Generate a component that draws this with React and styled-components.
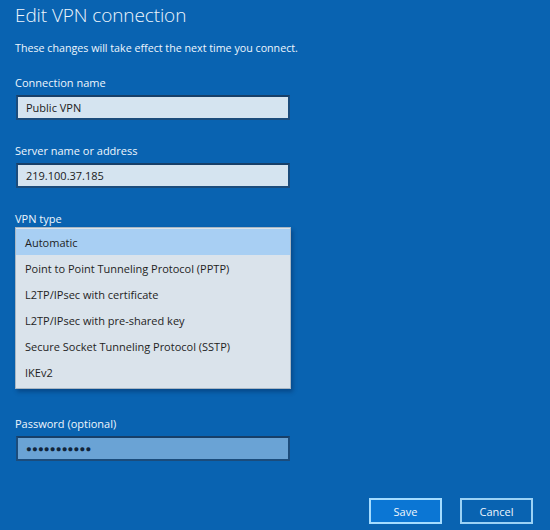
import React from 'react';
import styled, { createGlobalStyle } from 'styled-components';

const GlobalStyle = createGlobalStyle`
  html, body {
    margin: 0;
    padding: 0;
    background: #0963b1;
  }
  body {
    font-family: "Open Sans", "Noto Sans", sans-serif;
  }
`;

const Panel = styled.div`
  width: 550px;
  height: 530px;
  box-sizing: border-box;
  padding: 2px 15px 0 15px;
  background: #0963b1;
  color: #eef6fd;
  display: flex;
  flex-direction: column;
  overflow: hidden;
`;

const Title = styled.h1`
  margin: 0;
  font-size: 19px;
  font-weight: 300;
  line-height: 26px;
  letter-spacing: -0.1px;
`;

const Note = styled.p`
  margin: 13px 0 0 0;
  font-size: 10.7px;
  line-height: 14px;
`;

const Field = styled.div`
  display: flex;
  flex-direction: column;
  margin-top: ${p => p.gap}px;
`;

const Label = styled.label`
  font-size: 11px;
  line-height: 14px;
  margin-bottom: 5px;
`;

const Input = styled.div`
  width: 274px;
  height: 25px;
  box-sizing: border-box;
  margin-left: 1px;
  padding: 0 8px;
  display: flex;
  align-items: center;
  background: ${p => (p.muted ? '#6aa3d5' : '#d5e4f0')};
  border: 2px solid #1b4c7c;
  border-top-color: #173f68;
  color: #1a1a1a;
  font-size: 11px;
`;

const Dots = styled.span`
  letter-spacing: 0.2px;
  font-size: 9.5px;
  color: #10243a;
`;

/* open drop-down list, drawn over the closed select */
const Menu = styled.ul`
  list-style: none;
  margin: -4px 0 0 0;
  padding: 1px 0 3px 0;
  width: 276px;
  box-sizing: border-box;
  background: #dae3eb;
  border: 1px solid #a9b7c4;
  box-shadow: 2px 3px 4px rgba(0, 30, 70, 0.35);
`;

const Option = styled.li`
  height: 26px;
  display: flex;
  align-items: center;
  padding: 0 9px;
  font-size: 11px;
  color: #1e1e1e;
  background: ${p => (p.selected ? '#a8cff3' : 'transparent')};
`;

const Actions = styled.div`
  display: flex;
  justify-content: flex-end;
  gap: 18px;
  margin-top: 37px;
  padding-right: 2px;
`;

const Button = styled.button`
  width: 73px;
  height: 26px;
  box-sizing: border-box;
  font-family: inherit;
  font-size: 11px;
  color: #eef6fd;
  background: ${p => (p.primary ? '#0b76d4' : '#0963b1')};
  border: 2px solid ${p => (p.primary ? '#a4dcff' : '#9bd2f5')};
  padding: 0;
`;

const vpnTypes = [
  'Automatic',
  'Point to Point Tunneling Protocol (PPTP)',
  'L2TP/IPsec with certificate',
  'L2TP/IPsec with pre-shared key',
  'Secure Socket Tunneling Protocol (SSTP)',
  'IKEv2',
];

const App = () => (
  <Panel>
    <GlobalStyle />
    <Title>Edit VPN connection</Title>
    <Note>These changes will take effect the next time you connect.</Note>

    <Field gap={21}>
      <Label>Connection name</Label>
      <Input>Public VPN</Input>
    </Field>

    <Field gap={24}>
      <Label>Server name or address</Label>
      <Input>219.100.37.185</Input>
    </Field>

    <Field gap={24}>
      <Label>VPN type</Label>
      <Menu>
        {vpnTypes.map((t, i) => (
          <Option key={t} selected={i === 0}>{t}</Option>
        ))}
      </Menu>
    </Field>

    <Field gap={28}>
      <Label>Password (optional)</Label>
      <Input muted>
        <Dots>●●●●●●●●●●●</Dots>
      </Input>
    </Field>

    <Actions>
      <Button primary>Save</Button>
      <Button>Cancel</Button>
    </Actions>
  </Panel>
);

export default App;
